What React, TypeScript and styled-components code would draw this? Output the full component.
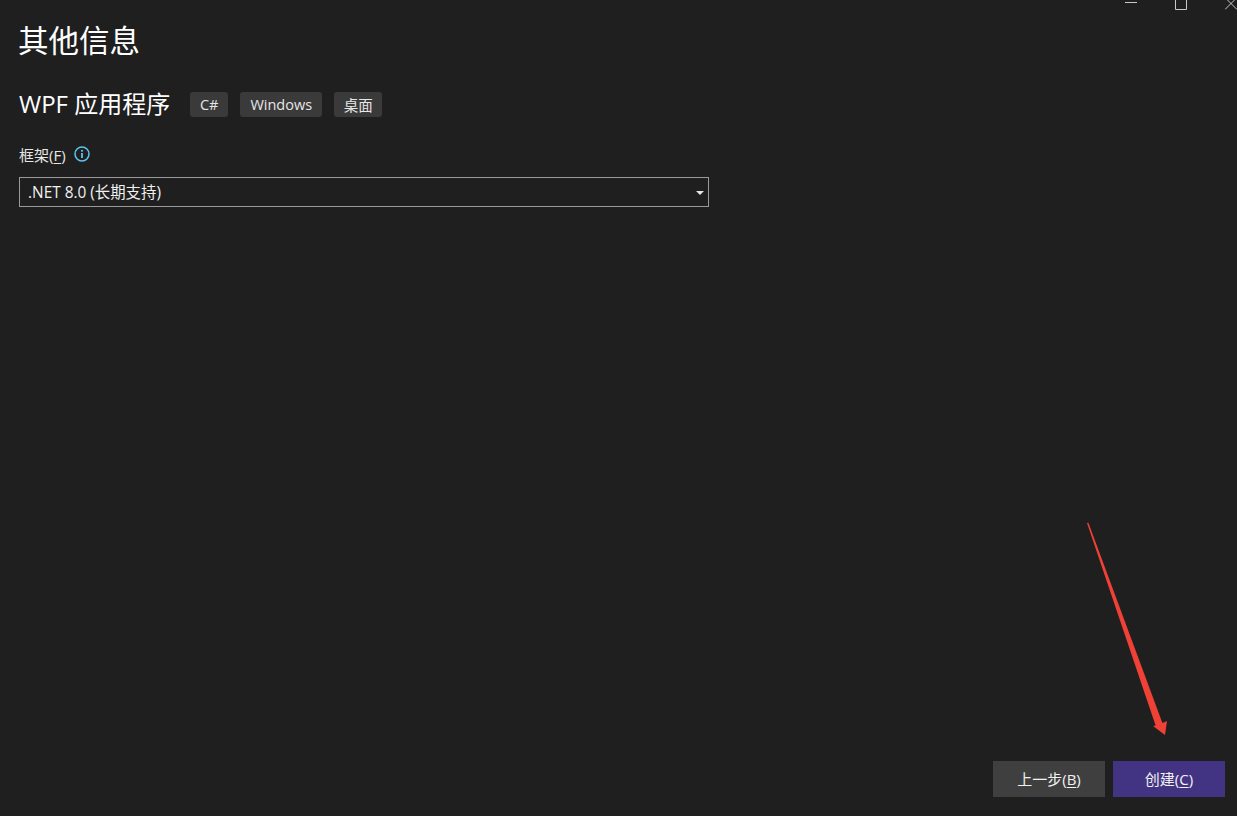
import React from "react";
import styled, { createGlobalStyle } from "styled-components";

const GlobalStyle = createGlobalStyle`
  html, body {
    margin: 0;
    padding: 0;
    height: 100%;
    background: #1f1f1f;
  }
  #root {
    height: 100%;
  }
`;

const Page = styled.div`
  position: relative;
  box-sizing: border-box;
  height: 100vh;
  overflow: hidden;
  display: flex;
  flex-direction: column;
  background: #1f1f1f;
  color: #f1f1f1;
  font-family: "Open Sans", "Noto Sans CJK SC", sans-serif;
`;

const WindowBar = styled.div`
  display: flex;
  justify-content: flex-end;
  height: 10px;
  gap: 38px;
  overflow: hidden;
`;

const WinIcon = styled.svg`
  width: 12px;
  height: 10px;
  display: block;
  stroke: #c8c8c8;
  fill: none;
`;

const Content = styled.main`
  flex: 1;
  display: flex;
  flex-direction: column;
  padding: 0 0 0 19px;
`;

const Title = styled.h1`
  margin: 9px 0 0 -1px;
  font-size: 30.5px;
  line-height: 42px;
  font-weight: 400;
  color: #ffffff;
`;

const HeadRow = styled.div`
  display: flex;
  align-items: center;
  margin-top: 25px;
`;

const AppName = styled.h2`
  margin: 0 20px 0 0;
  font-size: 24px;
  line-height: 36px;
  font-weight: 400;
  color: #ffffff;
`;

const Tags = styled.div`
  display: flex;
  gap: 12px;
`;

const Tag = styled.span<{ $width: number }>`
  display: flex;
  align-items: center;
  justify-content: center;
  box-sizing: border-box;
  width: ${(p) => p.$width}px;
  height: 25px;
  border-radius: 3px;
  background: #3a3a3a;
  font-size: 14.5px;
  color: #e6e6e6;
`;

const FieldLabel = styled.div`
  display: flex;
  align-items: center;
  gap: 8px;
  margin-top: 20px;
  height: 24px;
  font-size: 15px;
  color: #e6e6e6;
`;

const Key = styled.span`
  text-decoration: underline;
  text-underline-offset: 2px;
`;

const Select = styled.div`
  display: flex;
  align-items: center;
  justify-content: space-between;
  box-sizing: border-box;
  width: 690px;
  height: 30px;
  margin-top: 11px;
  padding: 0 4px 2px 8px;
  border: 1px solid #9a9a9a;
  font-size: 15.4px;
  color: #f1f1f1;
`;

const Caret = styled.span`
  width: 0;
  height: 0;
  margin-top: 4px;
  border-left: 4px solid transparent;
  border-right: 4px solid transparent;
  border-top: 4px solid #e6e6e6;
`;

const Footer = styled.footer`
  display: flex;
  justify-content: flex-end;
  gap: 8px;
  padding: 0 12px 19px 0;
`;

const Button = styled.button<{ $primary?: boolean }>`
  width: 112px;
  height: 36px;
  border: 0;
  padding: 0 0 2px;
  background: ${(p) => (p.$primary ? "#433483" : "#3f3f3f")};
  color: #f1f1f1;
  font-family: inherit;
  font-size: 15px;
`;

const Arrow = styled.svg`
  position: absolute;
  left: 1080px;
  top: 518px;
  width: 95px;
  height: 225px;
`;

export default function App() {
  return (
    <Page>
      <GlobalStyle />
      <WindowBar>
        <WinIcon viewBox="0 0 12 10">
          <path d="M0 2.5H12" />
        </WinIcon>
        <WinIcon viewBox="0 0 12 10">
          <path d="M0.5 -2V9.5H11.5V-2" />
        </WinIcon>
        <WinIcon viewBox="0 0 12 10">
          <path d="M0 9.5L12 -2.5M0 -2.5L12 9.5" />
        </WinIcon>
      </WindowBar>
      <Content>
        <Title>其他信息</Title>
        <HeadRow>
          <AppName>WPF 应用程序</AppName>
          <Tags>
            <Tag $width={38}>C#</Tag>
            <Tag $width={82}>Windows</Tag>
            <Tag $width={48}>桌面</Tag>
          </Tags>
        </HeadRow>
        <FieldLabel>
          <span>
            框架(<Key>F</Key>)
          </span>
          <svg width="16" height="16" viewBox="0 0 16 16" fill="none">
            <circle cx="8" cy="8" r="7" stroke="#5cc3ee" strokeWidth="1.5" />
            <path d="M8 7V12" stroke="#5cc3ee" strokeWidth="1.8" />
            <circle cx="8" cy="4.8" r="1.1" fill="#5cc3ee" />
          </svg>
        </FieldLabel>
        <Select>
          <span>.NET 8.0 (长期支持)</span>
          <Caret />
        </Select>
      </Content>
      <Footer>
        <Button>
          上一步(<Key>B</Key>)
        </Button>
        <Button $primary>
          创建(<Key>C</Key>)
        </Button>
      </Footer>
      <Arrow viewBox="1080 518 95 225">
        <path
          d="M1087 523 L1088.4 522.8 L1162.4 723 L1167 721 L1165 735 L1153 726 L1155.6 725.6 Z"
          fill="#ef4136"
        />
      </Arrow>
    </Page>
  );
}
